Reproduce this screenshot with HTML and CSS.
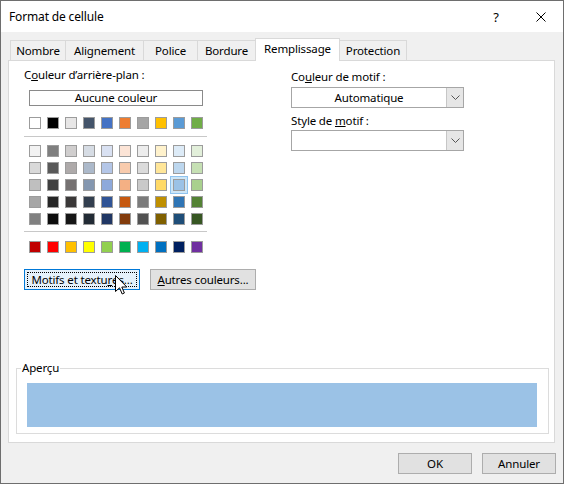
FILE: index.html
```html
<!DOCTYPE html>
<html lang="fr">
<head>
<meta charset="utf-8">
<title>Format de cellule</title>
<link rel="stylesheet" href="styles.css">
</head>
<body>
<div class="window">
	<!-- title bar -->
	<div class="titlebar">
		<span class="title">Format de cellule</span>
		<span class="caption-btn help">?</span>
		<span class="caption-btn close">
			<svg width="10" height="10" viewBox="0 0 10 10"><path d="M0.5 0.5 L9.5 9.5 M9.5 0.5 L0.5 9.5" stroke="#000" stroke-width="1" fill="none"/></svg>
		</span>
	</div>

	<div class="content">
		<div class="tabs">
			<div class="tab t-nombre">Nombre</div>
			<div class="tab t-align">Alignement</div>
			<div class="tab t-police">Police</div>
			<div class="tab t-bordure">Bordure</div>
			<div class="tab t-rempl active">Remplissage</div>
			<div class="tab t-protect">Protection</div>
		</div>

		<div class="panel">
			<div class="cols">
				<div class="left">
					<div class="label">C<u>o</u>uleur d’arrière-plan :</div>
					<div class="none-btn">Aucune couleur</div>
					<div class="swatch-row" id="themeRow"></div>
					<div class="sep"></div>
					<div class="swatch-grid" id="tintGrid"></div>
					<div class="sep sep2"></div>
					<div class="swatch-row std-row" id="stdRow"></div>
					<div class="btn-row">
						<div class="btn focus"><span class="focus-rect">Motifs et textu<u>r</u>es...</span></div>
						<div class="btn other"><u>A</u>utres couleurs...</div>
						<svg class="cursor" width="13" height="20" viewBox="0 0 13 20"><path d="M0.5 0.5 L0.5 16.5 L4.5 12.8 L7.2 19 L9.4 18 L6.8 12 L11.8 12 Z" fill="#fff" stroke="#000" stroke-width="1" stroke-linejoin="miter"/></svg>
					</div>
				</div>
				<div class="right">
					<div class="label">Co<u>u</u>leur de motif :</div>
					<div class="combo">
						<span class="combo-text">Automatique</span>
						<span class="combo-arrow"><svg width="9" height="5" viewBox="0 0 9 5"><path d="M0.5 0.5 L4.5 4.5 L8.5 0.5" stroke="#555" fill="none"/></svg></span>
					</div>
					<div class="label label2">Style de <u>m</u>otif :</div>
					<div class="combo combo2">
						<span class="combo-text"></span>
						<span class="combo-arrow"><svg width="9" height="5" viewBox="0 0 9 5"><path d="M0.5 0.5 L4.5 4.5 L8.5 0.5" stroke="#555" fill="none"/></svg></span>
					</div>
				</div>
			</div>

			<fieldset class="preview-box">
				<legend>Aperçu</legend>
				<div class="preview"></div>
			</fieldset>
		</div>

		<div class="footer">
			<div class="btn dlg">OK</div>
			<div class="btn dlg">Annuler</div>
		</div>
	</div>
</div>

<script>
	/* theme colours, tints and standard colours of the palette */
	var themeColors = ["#ffffff", "#000000", "#e7e6e6", "#44546a", "#4472c4", "#ed7d31", "#a5a5a5", "#ffc000", "#5b9bd5", "#70ad47"];
	var tints = [
		["#f2f2f2", "#7f7f7f", "#d0cece", "#d6dce4", "#d9e1f2", "#fce4d6", "#ededed", "#fff2cc", "#ddebf7", "#e2efda"],
		["#d9d9d9", "#595959", "#aeaaaa", "#acb9ca", "#b4c6e7", "#f8cbad", "#dbdbdb", "#ffe699", "#bdd7ee", "#c6e0b4"],
		["#bfbfbf", "#404040", "#757171", "#8497b0", "#8ea9db", "#f4b084", "#c9c9c9", "#ffd966", "#9bc2e6", "#a9d08e"],
		["#a6a6a6", "#262626", "#3a3838", "#333f4f", "#305496", "#c65911", "#7b7b7b", "#bf8f00", "#2f75b5", "#548235"],
		["#808080", "#0d0d0d", "#161616", "#222b35", "#203764", "#833c0c", "#525252", "#806000", "#1f4e78", "#375623"]
	];
	var standard = ["#c00000", "#ff0000", "#ffc000", "#ffff00", "#92d050", "#00b050", "#00b0f0", "#0070c0", "#002060", "#7030a0"];

	function addSwatch(parent, color, selected) {
		var s = document.createElement("div");
		s.className = selected ? "swatch selected" : "swatch";
		s.style.background = color;
		parent.appendChild(s);
	}

	var themeRow = document.getElementById("themeRow");
	for (var i = 0; i < themeColors.length; i++) {
		addSwatch(themeRow, themeColors[i], false);
	}

	var grid = document.getElementById("tintGrid");
	for (var r = 0; r < tints.length; r++) {
		for (var c = 0; c < tints[r].length; c++) {
			addSwatch(grid, tints[r][c], r == 2 && c == 8);
		}
	}

	var stdRow = document.getElementById("stdRow");
	for (var k = 0; k < standard.length; k++) {
		addSwatch(stdRow, standard[k], false);
	}
</script>
</body>
</html>
```

FILE: styles.css
```css
body {
    margin: 0;
    font-family: "Noto Sans", "Open Sans", sans-serif;
    font-size: 11.5px;
    letter-spacing: -0.15px;
    color: #000;
}

.window {
    width: 564px;
    height: 484px;
    box-sizing: border-box;
    border: 1px solid #6e6e6e;
    background-color: #f0f0f0;
    display: flex;
    flex-direction: column;
}

/* title bar */
.titlebar {
    height: 31px;
    background-color: #fff;
    display: flex;
    align-items: center;
}

.title {
    flex: 1;
    padding-left: 8px;
    font-size: 12px;
}

.caption-btn {
    display: flex;
    align-items: center;
    justify-content: center;
    height: 31px;
}

.help {
    width: 44px;
    font-size: 13px;
    letter-spacing: 0;
}

.close {
    width: 45px;
}

/* tabs + panel */
.content {
    padding: 6px 7px 0 7px;
}

.tabs {
    display: flex;
    align-items: flex-end;
    height: 22px;
    padding-left: 2px;
}

.tab {
    box-sizing: border-box;
    height: 20px;
    border: 1px solid #d9d9d9;
    border-bottom: none;
    margin-right: -1px;
    background-color: #f0f0f0;
    display: flex;
    align-items: center;
    justify-content: center;
    padding-bottom: 1px;
}

.tab.active {
    height: 23px;
    background-color: #fff;
    margin-bottom: -1px;
    position: relative;
    z-index: 1;
    padding-bottom: 3px;
}

.t-nombre { width: 56px; }
.t-align { width: 79px; }
.t-police { width: 55px; }
.t-bordure { width: 59px; }
.t-rempl { width: 85px; }
.t-protect { width: 68px; }

.panel {
    width: 547px;
    height: 383px;
    box-sizing: border-box;
    border: 1px solid #d9d9d9;
    background-color: #fff;
    display: flex;
    flex-direction: column;
    padding-top: 6px;
}

.cols {
    display: flex;
}

.left {
    width: 267px;
    padding-left: 15px;
}

.right {
    padding-top: 2px;
}

.label {
    line-height: 16px;
    height: 16px;
}

.none-btn {
    box-sizing: border-box;
    width: 174px;
    height: 16px;
    margin: 7px 0 0 5px;
    border: 1px solid #8a8a8a;
    text-align: center;
    line-height: 14px;
}

/* colour swatches */
.swatch-row {
    display: flex;
    gap: 6px;
    margin: 11px 0 0 5px;
}

.swatch-grid {
    display: grid;
    grid-template-columns: repeat(10, 12px);
    column-gap: 6px;
    row-gap: 5px;
    margin: 8px 0 0 5px;
}

.swatch {
    box-sizing: border-box;
    width: 12px;
    height: 12px;
    border: 1px solid #9c9c9c;
}

.swatch.selected {
    box-shadow: 0 0 0 2px #cde6f7, 0 0 0 3px #8fc3ee;
}

.sep {
    width: 183px;
    height: 1px;
    background-color: #c8c8c8;
    margin-top: 7px;
}

.sep2 {
    margin-top: 6px;
}

.std-row {
    margin-top: 9px;
}

/* buttons */
.btn-row {
    display: flex;
    gap: 10px;
    margin-top: 16px;
    position: relative;
}

.btn {
    box-sizing: border-box;
    height: 21px;
    border: 1px solid #adadad;
    background-color: #e1e1e1;
    display: flex;
    align-items: center;
    justify-content: center;
}

.btn.focus {
    width: 116px;
    border-color: #0078d7;
    background-color: #e5f1fb;
    padding: 2px;
}

.focus-rect {
    flex: 1;
    height: 100%;
    box-sizing: border-box;
    border: 1px dotted #000;
    display: flex;
    align-items: center;
    justify-content: center;
}

.btn.other {
    width: 106px;
}

.cursor {
    position: absolute;
    left: 91px;
    top: 6px;
}

/* combos */
.combo {
    box-sizing: border-box;
    width: 173px;
    height: 21px;
    margin-top: 2px;
    border: 1px solid #a6a6a6;
    display: flex;
}

.combo-text {
    flex: 1;
    text-align: center;
    line-height: 19px;
}

.combo-arrow {
    width: 16px;
    border-left: 1px solid #c6c6c6;
    background-color: #e6e6e6;
    display: flex;
    align-items: center;
    justify-content: center;
}

.label2 {
    margin-top: 5px;
}

.combo2 {
    margin-top: 1px;
}

/* preview group */
.preview-box {
    margin: auto 5px 8px 7px;
    padding: 0 5px 6px 4px;
    border: 1px solid #dcdcdc;
    min-width: 0;
}

.preview-box legend {
    padding: 0 1px;
    line-height: 14px;
}

.preview {
    width: 510px;
    height: 44px;
    margin: 8px 0 0 6px;
    background-color: #9bc2e6;
}

/* footer */
.footer {
    display: flex;
    justify-content: flex-end;
    gap: 10px;
    margin-top: 10px;
}

.btn.dlg {
    width: 74px;
}
```
